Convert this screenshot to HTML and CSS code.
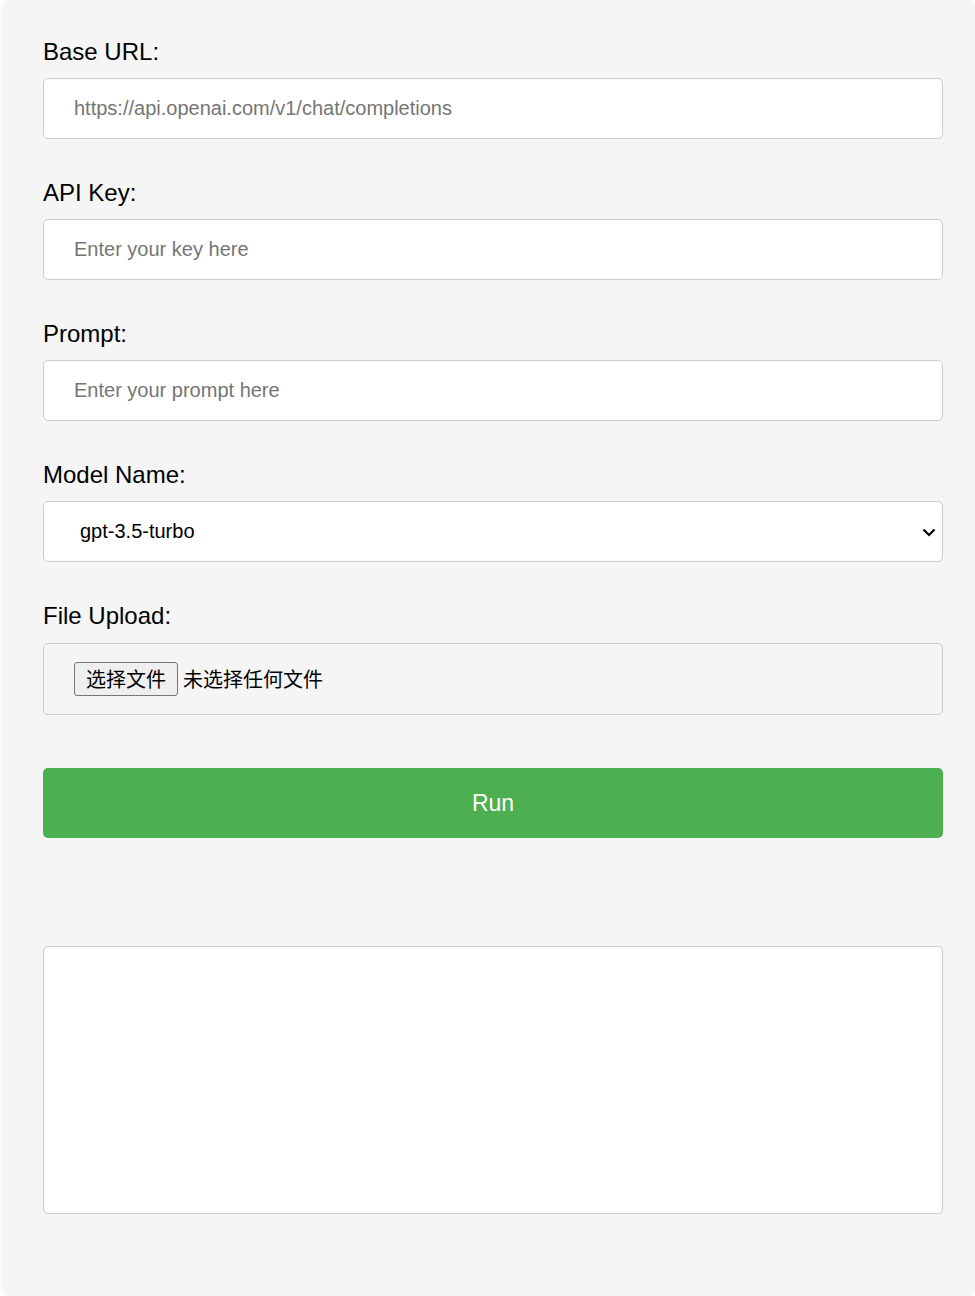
FILE: index.html
```html
<!DOCTYPE html>
<html lang="zh-CN">
<head>
<meta charset="utf-8">
<title>API Runner</title>
<link rel="stylesheet" href="styles.css">
</head>
<body>
<div class="card">
  <div class="group">
    <label class="label" for="base">Base URL:</label>
    <input class="field" id="base" type="text" placeholder="https://api.openai.com/v1/chat/completions">
  </div>
  <div class="group">
    <label class="label" for="key">API Key:</label>
    <input class="field" id="key" type="text" placeholder="Enter your key here">
  </div>
  <div class="group">
    <label class="label" for="prompt">Prompt:</label>
    <input class="field" id="prompt" type="text" placeholder="Enter your prompt here">
  </div>
  <div class="group">
    <label class="label" for="model">Model Name:</label>
    <div class="select-wrap">
      <select class="field select" id="model">
        <option>gpt-3.5-turbo</option>
        <option>gpt-4</option>
      </select>
      <svg class="chevron" width="14" height="9" viewBox="0 0 14 9"><path d="M1.5 1.5 L7 7 L12.5 1.5" fill="none" stroke="#000" stroke-width="2.2"/></svg>
    </div>
  </div>
  <div class="group">
    <span class="label">File Upload:</span>
    <div class="file-box">
      <label class="file-btn">选择文件<input class="file-hidden" type="file"></label>
      <span class="file-status">未选择任何文件</span>
    </div>
  </div>
  <button class="run" type="button">Run</button>
  <div class="output"></div>
</div>
</body>
</html>
```
FILE: styles.css
```css
html, body {
  margin: 0;
  padding: 0;
  background: #ffffff;
  overflow: hidden;
}
body {
  font-family: "Liberation Sans", Arial, sans-serif;
}
.card {
  margin-left: 5px;
  width: 970px;
  height: 1296px;
  box-sizing: border-box;
  padding: 38px 32px 82px 38px;
  background: #f5f5f5;
  border-radius: 12px;
  box-shadow: 0 0 8px rgba(0, 0, 0, 0.12);
  display: flex;
  flex-direction: column;
}
.group {
  display: flex;
  flex-direction: column;
  margin-bottom: 40px;
}
.label {
  display: block;
  font-size: 24px;
  line-height: 28px;
  color: #000;
  margin-bottom: 12px;
}
.field {
  box-sizing: border-box;
  width: 900px;
  height: 61px;
  padding: 18px 30px;
  font-family: "Liberation Sans", Arial, sans-serif;
  font-size: 20px;
  line-height: 23px;
  border: 1px solid #cccccc;
  border-radius: 5px;
  background: #ffffff;
  color: #000;
  outline: none;
}
.field::placeholder {
  color: #757575;
}
.select-wrap {
  position: relative;
  width: 900px;
}
.select {
  appearance: none;
  -webkit-appearance: none;
  padding-left: 36px;
}
.chevron {
  position: absolute;
  right: 7px;
  top: 27px;
  pointer-events: none;
}
.file-box {
  box-sizing: border-box;
  width: 900px;
  height: 72px;
  margin-top: 1px;
  padding: 18px 30px;
  border: 1px solid #cccccc;
  border-radius: 5px;
  display: flex;
  align-items: center;
  font-family: "Noto Sans CJK SC", sans-serif;
  font-size: 20px;
  color: #000;
}
.file-btn {
  box-sizing: border-box;
  height: 34px;
  padding: 0 11px;
  display: flex;
  align-items: center;
  background: #efefef;
  border: 1px solid #767676;
  border-radius: 3px;
  font-size: 20px;
  line-height: 1;
  color: #000;
}
.file-hidden {
  display: none;
}
.file-status {
  margin-left: 5px;
  line-height: 1;
}
.run {
  width: 900px;
  height: 70px;
  margin-top: 13px;
  border: none;
  border-radius: 5px;
  background: #4caf50;
  color: #ffffff;
  font-family: "Liberation Sans", Arial, sans-serif;
  font-size: 23px;
  padding: 0;
}
.output {
  box-sizing: border-box;
  width: 900px;
  height: 268px;
  margin-top: 108px;
  background: #ffffff;
  border: 1px solid #cccccc;
  border-radius: 5px;
}
```
